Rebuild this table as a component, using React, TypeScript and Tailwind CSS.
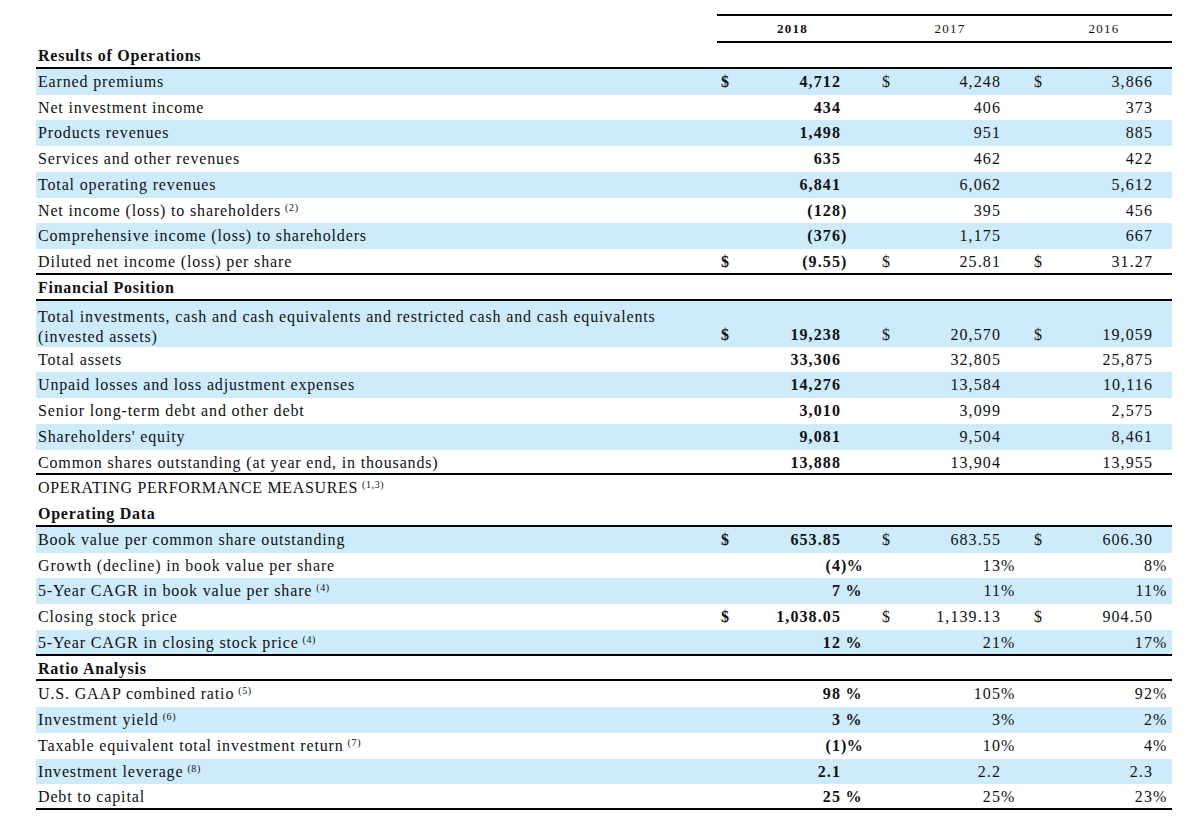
import React from "react";

type Row =
  | { kind: "section"; label: string }
  | { kind: "plain"; label: string; sup?: string }
  | {
      kind: "data";
      label: string;
      sup?: string;
      blue?: boolean;
      dollar?: boolean;
      line?: boolean;
      tall?: boolean;
      v: [string, string, string];
    };

const rows: Row[] = [
  { kind: "section", label: "Results of Operations" },
  { kind: "data", label: "Earned premiums", blue: true, dollar: true, v: ["4,712", "4,248", "3,866"] },
  { kind: "data", label: "Net investment income", v: ["434", "406", "373"] },
  { kind: "data", label: "Products revenues", blue: true, v: ["1,498", "951", "885"] },
  { kind: "data", label: "Services and other revenues", v: ["635", "462", "422"] },
  { kind: "data", label: "Total operating revenues", blue: true, v: ["6,841", "6,062", "5,612"] },
  { kind: "data", label: "Net income (loss) to shareholders", sup: "(2)", v: ["(128)", "395", "456"] },
  { kind: "data", label: "Comprehensive income (loss) to shareholders", blue: true, v: ["(376)", "1,175", "667"] },
  { kind: "data", label: "Diluted net income (loss) per share", dollar: true, line: true, v: ["(9.55)", "25.81", "31.27"] },
  { kind: "section", label: "Financial Position" },
  {
    kind: "data",
    label: "Total investments, cash and cash equivalents and restricted cash and cash equivalents (invested assets)",
    blue: true,
    dollar: true,
    tall: true,
    v: ["19,238", "20,570", "19,059"],
  },
  { kind: "data", label: "Total assets", v: ["33,306", "32,805", "25,875"] },
  { kind: "data", label: "Unpaid losses and loss adjustment expenses", blue: true, v: ["14,276", "13,584", "10,116"] },
  { kind: "data", label: "Senior long-term debt and other debt", v: ["3,010", "3,099", "2,575"] },
  { kind: "data", label: "Shareholders' equity", blue: true, v: ["9,081", "9,504", "8,461"] },
  { kind: "data", label: "Common shares outstanding (at year end, in thousands)", line: true, v: ["13,888", "13,904", "13,955"] },
  { kind: "plain", label: "OPERATING PERFORMANCE MEASURES", sup: "(1,3)" },
  { kind: "section", label: "Operating Data" },
  { kind: "data", label: "Book value per common share outstanding", blue: true, dollar: true, v: ["653.85", "683.55", "606.30"] },
  { kind: "data", label: "Growth (decline) in book value per share", v: ["(4)%", "13%", "8%"] },
  { kind: "data", label: "5-Year CAGR in book value per share", sup: "(4)", blue: true, v: ["7 %", "11%", "11%"] },
  { kind: "data", label: "Closing stock price", dollar: true, v: ["1,038.05", "1,139.13", "904.50"] },
  { kind: "data", label: "5-Year CAGR in closing stock price", sup: "(4)", blue: true, line: true, v: ["12 %", "21%", "17%"] },
  { kind: "section", label: "Ratio Analysis" },
  { kind: "data", label: "U.S. GAAP combined ratio", sup: "(5)", v: ["98 %", "105%", "92%"] },
  { kind: "data", label: "Investment yield", sup: "(6)", blue: true, v: ["3 %", "3%", "2%"] },
  { kind: "data", label: "Taxable equivalent total investment return", sup: "(7)", v: ["(1)%", "10%", "4%"] },
  { kind: "data", label: "Investment leverage", sup: "(8)", blue: true, v: ["2.1", "2.2", "2.3"] },
  { kind: "data", label: "Debt to capital", line: true, v: ["25 %", "25%", "23%"] },
];

const cols = "grid grid-cols-[681px_23px_101px_27px_22px_111px_29px_20px_103px_19px]";

// split "(4)%" into "(4" and ")%", so digits line up on the column edge
function split(val: string): [string, string] {
  const m = val.match(/^(\(?[\d,.]+)(\)?)( ?%?)$/);
  if (!m) return [val, ""];
  return [m[1], m[2] + m[3]];
}

function Sup({ t }: { t?: string }) {
  if (!t) return null;
  return <span className="relative -top-[5px] ml-[4px] text-[10px] tracking-[0.6px]">{t}</span>;
}

function DataRow({ r }: { r: Extract<Row, { kind: "data" }> }) {
  const align = r.tall ? "self-end" : "";
  const dollarPad = ["pl-[4px] font-bold", "pl-[14px]", "pl-[4px]"];
  return (
    <div
      className={`${cols} ${r.tall ? "h-[46px]" : "h-[25.75px]"} ${r.blue ? "bg-[#cdebfa]" : ""} ${
        r.line ? "border-b-2 border-black" : ""
      }`}
    >
      {r.tall ? (
        <div className="w-[650px] self-end pl-[2px] leading-[20px] tracking-[0.85px]">{r.label}</div>
      ) : (
        <div className="pl-[2px] leading-[25px] tracking-[0.85px] whitespace-nowrap">
          {r.label}
          <Sup t={r.sup} />
        </div>
      )}
      {r.v.map((val, i) => {
        const [n, s] = split(val);
        const bold = i === 0 ? "font-bold" : "";
        return (
          <React.Fragment key={i}>
            <div className={`${align} leading-[25px] ${dollarPad[i]}`}>{r.dollar ? "$" : ""}</div>
            <div className={`${align} leading-[25px] text-right tracking-[1.1px] ${bold}`}>{n}</div>
            <div className={`${align} leading-[25px] whitespace-pre tracking-[0.5px] ${bold}`}>{s}</div>
          </React.Fragment>
        );
      })}
    </div>
  );
}

export default function App() {
  return (
    <div className="min-h-[816px] w-[1193px] bg-white pt-[14px] pl-[36px] font-['Liberation_Serif',serif] text-[16px] text-[#111]">
      <div className="w-[1136px]">
        <div className={`${cols} h-[29px]`}>
          <div />
          <div className="col-span-9 grid grid-cols-[151px_162px_142px] border-y-2 border-black text-[13px] leading-[25px] tracking-[1.2px]">
            <div className="text-center font-bold">2018</div>
            <div className="text-center pl-[2px]">2017</div>
            <div className="text-center pl-[6px]">2016</div>
          </div>
        </div>
        {rows.map((r, i) => {
          if (r.kind === "section")
            return (
              <div key={i} className="h-[25.75px] border-b-2 border-black pl-[2px] font-bold leading-[25px] tracking-[0.75px]">
                {r.label}
              </div>
            );
          if (r.kind === "plain")
            return (
              <div key={i} className="h-[25.75px] pl-[2px] leading-[25px] tracking-[0.65px]">
                {r.label}
                <Sup t={r.sup} />
              </div>
            );
          return <DataRow key={i} r={r} />;
        })}
      </div>
    </div>
  );
}
